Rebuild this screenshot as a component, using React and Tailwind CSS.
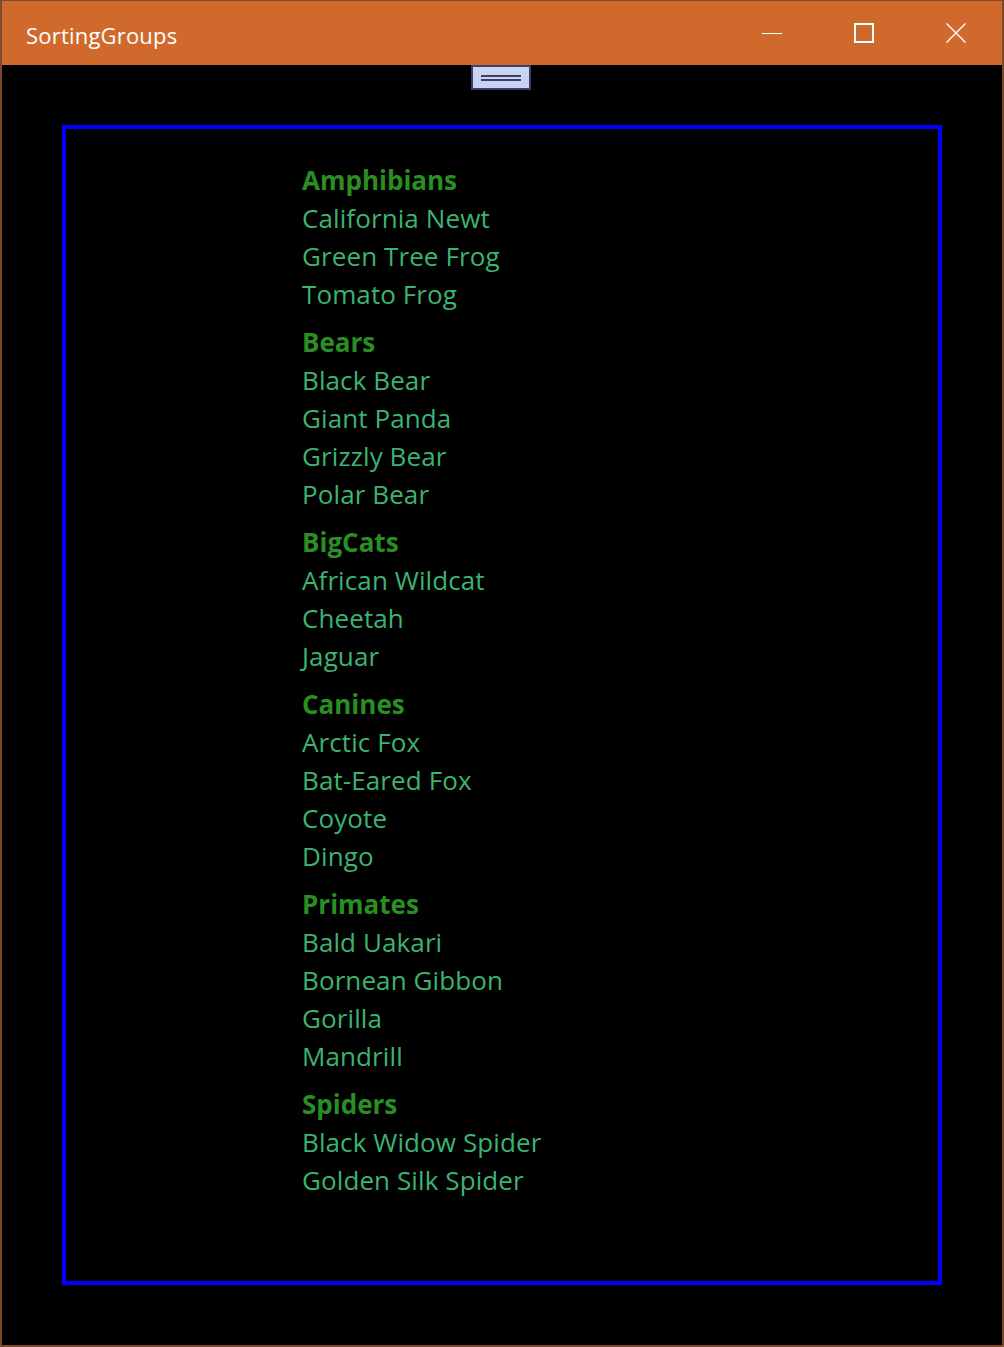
const groups = [
  { name: 'Amphibians', items: ['California Newt', 'Green Tree Frog', 'Tomato Frog'] },
  { name: 'Bears', items: ['Black Bear', 'Giant Panda', 'Grizzly Bear', 'Polar Bear'] },
  { name: 'BigCats', items: ['African Wildcat', 'Cheetah', 'Jaguar'] },
  { name: 'Canines', items: ['Arctic Fox', 'Bat-Eared Fox', 'Coyote', 'Dingo'] },
  { name: 'Primates', items: ['Bald Uakari', 'Bornean Gibbon', 'Gorilla', 'Mandrill'] },
  { name: 'Spiders', items: ['Black Widow Spider', 'Golden Silk Spider'] },
];

const App = () => {
  return (
    <div className="w-[1004px] h-[1347px] flex flex-col bg-black border-x-2 border-b-2 border-t border-[#7a4a2a] font-['Open_Sans',sans-serif]">
      {/* Title bar */}
      <div className="h-[64px] shrink-0 bg-[#cf6a2c] flex items-center text-white">
        <span className="ml-[24px] mt-[4px] text-[22px] tracking-[0.2px]">SortingGroups</span>
        <div className="ml-auto flex items-center h-full">
          <div className="w-[92px] h-full flex items-center justify-center">
            <svg width="20" height="20" viewBox="0 0 20 20">
              <rect x="0" y="10" width="20" height="1" fill="white" />
            </svg>
          </div>
          <div className="w-[92px] h-full flex items-center justify-center">
            <svg width="20" height="20" viewBox="0 0 20 20">
              <rect x="1" y="1" width="18" height="18" fill="none" stroke="white" strokeWidth="2" />
            </svg>
          </div>
          <div className="w-[92px] h-full flex items-center justify-center">
            <svg width="20" height="20" viewBox="0 0 20 20">
              <path d="M0.5 0.5 L19.5 19.5 M19.5 0.5 L0.5 19.5" stroke="white" strokeWidth="1.4" />
            </svg>
          </div>
        </div>
      </div>

      {/* Splitter handle */}
      <div className="flex justify-center">
        <div className="w-[60px] h-[25px] bg-[#c8d4f0] border-2 border-[#3a3f6e] flex flex-col items-center justify-center gap-[2px] ml-[-2px]">
          <div className="w-[40px] h-[2px] bg-[#3a3f6e]" />
          <div className="w-[40px] h-[2px] bg-[#3a3f6e]" />
        </div>
      </div>

      {/* Main list */}
      <div className="mt-[35px] ml-[60px] w-[880px] h-[1160px] border-4 border-[#0000ff] pt-[32px] pl-[236px]">
        {groups.map((g) => (
          <div key={g.name} className="mb-[10px]">
            <div className="h-[38px] leading-[38px] text-[26px] font-bold text-[#2a8f22]">{g.name}</div>
            {g.items.map((item) => (
              <div key={item} className="h-[38px] leading-[38px] text-[26px] text-[#3cb371] tracking-[0.1px]">
                {item}
              </div>
            ))}
          </div>
        ))}
      </div>
    </div>
  );
};

export default App;
